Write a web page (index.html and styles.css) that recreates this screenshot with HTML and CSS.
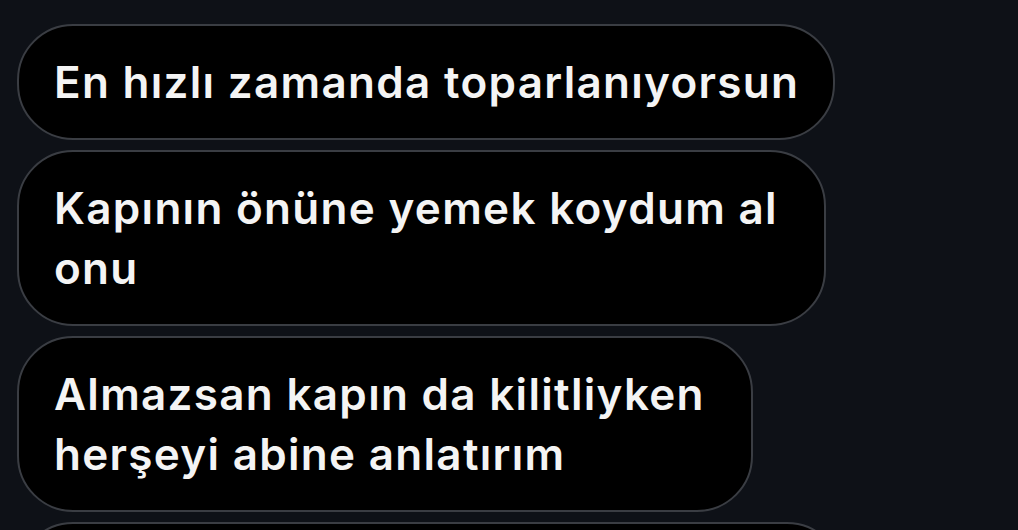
FILE: index.html
```html
<!DOCTYPE html>
<html lang="tr">
<head>
<meta charset="utf-8">
<link rel="stylesheet" href="styles.css">
</head>
<body>
<div class="thread">
  <div class="bubble">En hızlı zamanda toparlanıyorsun</div>
  <div class="bubble bubble-multi">Kapının önüne yemek koydum al<br>onu</div>
  <div class="bubble bubble-multi">Almazsan kapın da kilitliyken<br>herşeyi abine anlatırım</div>
  <div class="bubble bubble-next"></div>
</div>
</body>
</html>
```

FILE: styles.css
```css
html, body {
  margin: 0;
  padding: 0;
  background: #0e1117;
  overflow: hidden;
}
.thread {
  display: flex;
  flex-direction: column;
  align-items: flex-start;
  gap: 10px;
  padding: 24px 0 0 17px;
}
.bubble {
  box-sizing: border-box;
  background: #000;
  border: 2px solid #3a3d43;
  border-radius: 56px;
  padding: 26px 34px 26px 35px;
  color: #f4f4f4;
  font-family: Inter, "Noto Sans", sans-serif;
  font-weight: 600;
  font-size: 44px;
  letter-spacing: 1.3px;
  line-height: 60px;
  white-space: nowrap;
}
.bubble-multi {
  padding-right: 46px;
}
.bubble-next {
  width: 826px;
  height: 116px;
}
```
